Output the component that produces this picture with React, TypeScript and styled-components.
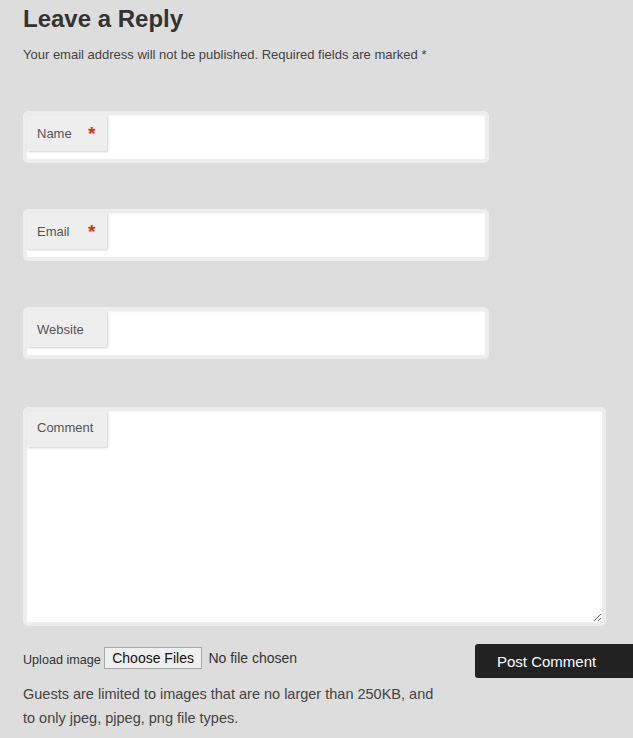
import React from "react";
import styled, { createGlobalStyle } from "styled-components";

const Global = createGlobalStyle`
  html, body { margin: 0; padding: 0; background: #dddddd; overflow: hidden; }
  body { font-family: "Liberation Sans", Arial, sans-serif; }
  * { box-sizing: border-box; }
`;

const Page = styled.div`
  padding: 4px 0 0 23px;
  width: 655px;
`;

const Title = styled.h2`
  margin: 0;
  font-size: 24px;
  line-height: 29px;
  font-weight: bold;
  color: #333333;
`;

const Note = styled.p`
  margin: 13px 0 0;
  font-size: 13px;
  line-height: 18px;
  color: #444444;
`;

const Fields = styled.div`
  margin-top: 47px;
  display: flex;
  flex-direction: column;
  gap: 46px;
`;

const FieldWrap = styled.div<{ $wide?: boolean }>`
  width: ${(p) => (p.$wide ? "583px" : "466px")};
  margin-top: ${(p) => (p.$wide ? "2px" : "0")};
  padding: 4px;
  background: #ededed;
  border-radius: 5px;
  display: grid;
`;

const Label = styled.label<{ $tight?: boolean }>`
  grid-area: 1 / 1;
  align-self: start;
  justify-self: start;
  position: relative;
  z-index: 1;
  width: 80px;
  height: 36px;
  line-height: ${(p) => (p.$tight ? "34px" : "37px")};
  padding-left: 10px;
  font-size: 13px;
  color: #555555;
  background: #eeeeee;
  box-shadow: 1px 1px 2px rgba(0, 0, 0, 0.18);
`;

const Star = styled.span`
  position: absolute;
  left: 61px;
  top: 0px;
  font-size: 19px;
  font-weight: bold;
  color: #c73a12;
`;

const TextInput = styled.input`
  grid-area: 1 / 1;
  width: 100%;
  height: 44px;
  border: none;
  outline: none;
  background: #ffffff;
  box-shadow: inset 0 1px 2px rgba(0, 0, 0, 0.05);
  padding: 0 10px 0 92px;
  font: 13px "Liberation Sans", Arial, sans-serif;
  color: #333;
`;

const TextArea = styled.textarea`
  grid-area: 1 / 1;
  width: 100%;
  height: 211px;
  border: none;
  outline: none;
  background: #ffffff;
  box-shadow: inset 0 1px 2px rgba(0, 0, 0, 0.05);
  padding: 44px 10px 10px 10px;
  font: 13px "Liberation Sans", Arial, sans-serif;
  display: block;
`;

const Bottom = styled.div`
  margin-top: 18px;
  width: 632px;
  display: flex;
  align-items: flex-start;
`;

const Left = styled.div`
  padding-top: 3px;
  display: flex;
  flex-direction: column;
`;

const UploadRow = styled.div`
  display: flex;
  align-items: center;
  gap: 3px;
  height: 22px;
`;

const UploadLabel = styled.span`
  font-size: 12.6px;
  color: #333333;
  padding-top: 3px;
`;

const FileInput = styled.input`
  font: 14px "Liberation Sans", Arial, sans-serif;
  color: #333333;
  &::file-selector-button {
    font: 14px "Liberation Sans", Arial, sans-serif;
    color: #111111;
    background: #efefef;
    border: 1px solid #a9a9a9;
    border-radius: 0;
    padding: 1px 7.5px;
    height: 22px;
    margin-right: 6px;
  }
`;

const Guests = styled.p`
  margin: 13px 0 0;
  font-size: 14.5px;
  line-height: 24px;
  color: #444444;
  width: 420px;
`;

const Submit = styled.button`
  margin-left: auto;
  width: 180px;
  height: 34px;
  line-height: 34px;
  padding: 0 0 0 22px;
  text-align: left;
  background: #222222;
  color: #ffffff;
  border: none;
  border-radius: 3px;
  font: 15px "Liberation Sans", Arial, sans-serif;
  cursor: pointer;
`;

type FieldProps = { label: string; required?: boolean; type?: string };

function Field({ label, required, type = "text" }: FieldProps) {
  const id = label.toLowerCase();
  return (
    <FieldWrap>
      <Label htmlFor={id}>
        {label}
        {required && <Star>*</Star>}
      </Label>
      <TextInput id={id} type={type} />
    </FieldWrap>
  );
}

export default function App() {
  return (
    <>
      <Global />
      <Page>
        <Title>Leave a Reply</Title>
        <Note>Your email address will not be published. Required fields are marked *</Note>
        <Fields>
          <Field label="Name" required />
          <Field label="Email" required type="email" />
          <Field label="Website" type="url" />
          <FieldWrap $wide>
            <Label htmlFor="comment" $tight>
              Comment
            </Label>
            <TextArea id="comment" />
          </FieldWrap>
        </Fields>
        <Bottom>
          <Left>
            <UploadRow>
              <UploadLabel>Upload image</UploadLabel>
              <FileInput type="file" multiple />
            </UploadRow>
            <Guests>
              Guests are limited to images that are no larger than 250KB, and to only jpeg, pjpeg, png file types.
            </Guests>
          </Left>
          <Submit type="submit">Post Comment</Submit>
        </Bottom>
      </Page>
    </>
  );
}
